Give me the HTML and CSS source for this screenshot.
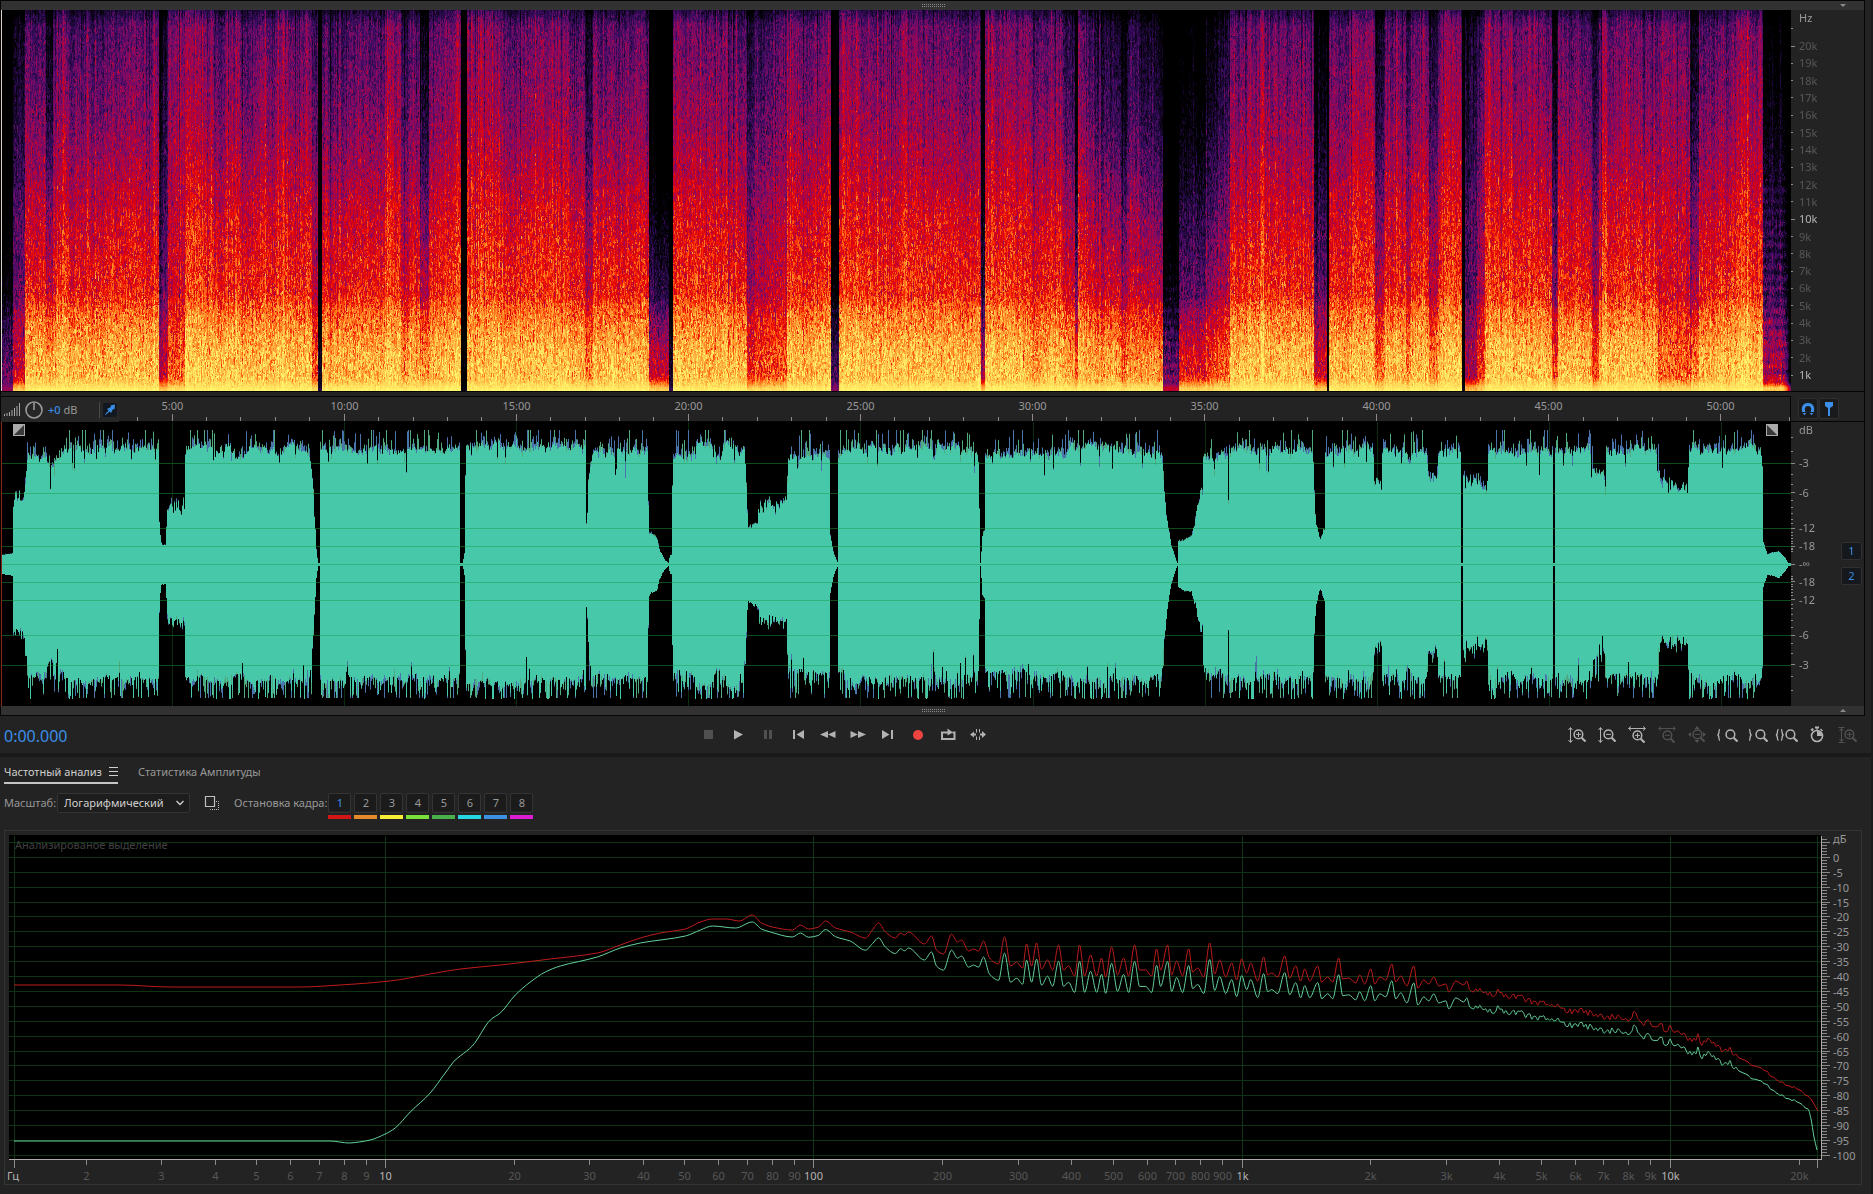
FILE: index.html
```html
<!DOCTYPE html>
<html lang="ru">
<head>
<meta charset="utf-8">
<title>Частотный анализ</title>
<link rel="stylesheet" href="styles.css">
</head>
<body>
<svg class="defs" aria-hidden="true">
  <symbol id="lens" viewBox="0 0 12 12"><circle cx="5" cy="5" r="4" fill="none" stroke="currentColor" stroke-width="1.4"/><path d="M8 8l3.6 3.6" stroke="currentColor" stroke-width="2"/></symbol>
</svg>
<main class="app">
  <section class="editor">
    <div class="strip"><span class="grip"></span><i class="caret down"></i></div>
    <div class="spectral">
      <div class="view view-spec"><canvas id="spectrogram"></canvas></div>
      <div class="scale"><svg id="hz-scale"></svg></div>
    </div>
    <div class="timeline">
      <div class="ruler">
        <svg id="ruler"></svg>
        <div class="hud">
          <svg class="bars" width="18" height="16" viewBox="0 0 18 16"><path d="M1.5 14v-2M4 14v-3M6.500 14v-4M9 14v-6M11.500 14v-8M14 14V4M16.500 14V1" stroke="currentColor" stroke-width="1"/></svg>
          <svg width="20" height="20" viewBox="0 0 20 20"><circle cx="10" cy="10" r="8" fill="none" stroke="currentColor" stroke-width="1.6"/><path d="M10 3v7" stroke="currentColor" stroke-width="1.6"/></svg>
          <span class="gain"><b>+0</b> dB</span>
          <button class="pin" aria-label="Закрепить"><svg width="12" height="12" viewBox="0 0 12 12"><path d="M6.500 1.500L11 0.500 10.500 5.500 9 5 7 9 5.600 7.400 1.500 11 1 10.500 4.600 6.400 3 5 7 3z" fill="currentColor"/></svg></button>
        </div>
      </div>
      <div class="snap">
        <button aria-label="Привязка"><svg width="14" height="14" viewBox="0 0 14 14"><path d="M4.500 12C1 9 1.500 2.500 7 2.500S13 9 9.500 12" fill="none" stroke="currentColor" stroke-width="3"/><path d="M1.500 10.500h4M8.500 10.500h4" stroke="#161b22"/></svg></button>
        <button aria-label="Маркер"><svg width="14" height="14" viewBox="0 0 14 14"><path d="M3 0h8v4L8 6v8H6V6L3 4z" fill="currentColor"/></svg></button>
      </div>
    </div>
    <div class="waves">
      <div class="view view-wave"><canvas id="waveform"></canvas>
        <svg class="fade fade-in" width="12" height="12" viewBox="0 0 12 12"><path d="M0 0h12v12H0z" fill="#aaa"/><path d="M11 1v10H1z" fill="#3a3a3a"/></svg>
        <svg class="fade fade-out" width="12" height="12" viewBox="0 0 12 12"><path d="M0 0h12v12H0z" fill="#aaa"/><path d="M1 1v10h10z" fill="#3a3a3a"/></svg>
      </div>
      <div class="scale"><svg id="db-scale"></svg>
        <div class="channels"><button>1</button><button>2</button></div>
      </div>
    </div>
    <div class="strip"><span class="grip"></span><i class="caret up"></i></div>
  </section>

  <section class="transport">
    <output class="clock">0:00.000</output>
    <div class="play">
      <button class="off" aria-label="Стоп"><svg viewBox="0 0 20 20"><path d="M6 5h9v9H6z" fill="currentColor"/></svg></button>
      <button aria-label="Воспроизвести"><svg viewBox="0 0 20 20"><path d="M6 5l9 4.500-9 5z" fill="currentColor"/></svg></button>
      <button class="off" aria-label="Пауза"><svg viewBox="0 0 20 20"><path d="M6 5h3v9H6zM11 5h3v9h-3z" fill="currentColor"/></svg></button>
      <button aria-label="В начало"><svg viewBox="0 0 20 20"><path d="M5 5h2v9H5zM16 5v9L8.500 9.500z" fill="currentColor"/></svg></button>
      <button aria-label="Назад"><svg viewBox="0 0 20 20"><path d="M10 6v7L2 9.500zM17.500 6v7l-7.500-3.500z" fill="currentColor"/></svg></button>
      <button aria-label="Вперёд"><svg viewBox="0 0 20 20"><path d="M2.500 6v7L10 9.500zM10 6v7l8-3.500z" fill="currentColor"/></svg></button>
      <button aria-label="В конец"><svg viewBox="0 0 20 20"><path d="M13 5h2v9h-2zM4 5v9l7.500-4.500z" fill="currentColor"/></svg></button>
      <button class="rec" aria-label="Запись"><svg viewBox="0 0 20 20"><circle cx="10" cy="10" r="5" fill="currentColor"/></svg></button>
      <button aria-label="Цикл"><svg viewBox="0 0 20 20"><path d="M7 7.500H4V14h12.500V7.500H14.500" fill="none" stroke="currentColor" stroke-width="2"/><path d="M7 6.500h2.500V3.500l5.500 4-5.500 3V8.500H7z" fill="currentColor"/></svg></button>
      <button aria-label="Пропуск выделения"><svg viewBox="0 0 20 20"><path d="M2 9.500l4-3v2h2v2H6v2zM18 9.500l-4-3.500v2.500h-2v2h2V13z" fill="currentColor"/><path d="M8.500 4v3.500M8.500 11.500V15M11.500 4v3.500M11.500 11.500V15" stroke="currentColor"/></svg></button>
    </div>
    <div class="zooms">
      <button aria-label="Увеличить амплитуду"><svg viewBox="0 0 20 20"><path d="M3.500 3v14M1.500 5l2-2.500 2 2.500M1.500 15l2 2.500 2-2.500" fill="none" stroke="currentColor"/><use href="#lens" x="6" y="4" width="13" height="13"/><path d="M9 9.400h5M11.500 7v5" stroke="currentColor"/></svg></button>
      <button aria-label="Уменьшить амплитуду"><svg viewBox="0 0 20 20"><path d="M3.500 3v14M1.500 5l2-2.500 2 2.500M1.500 15l2 2.500 2-2.500" fill="none" stroke="currentColor"/><use href="#lens" x="6" y="4" width="13" height="13"/><path d="M9 9.400h5" stroke="currentColor"/></svg></button>
      <button aria-label="Увеличить время"><svg viewBox="0 0 20 20"><path d="M2 3.500h16M4 1.500l-2.500 2L4 5.500M16 1.500l2.500 2-2.500 2" fill="none" stroke="currentColor"/><use href="#lens" x="5" y="5" width="13" height="13"/><path d="M8 10.400h5M10.500 8v5" stroke="currentColor"/></svg></button>
      <button class="off" aria-label="Уменьшить время"><svg viewBox="0 0 20 20"><path d="M2 3.500h16M4 1.500l-2.500 2L4 5.500M16 1.500l2.500 2-2.500 2" fill="none" stroke="currentColor"/><use href="#lens" x="5" y="5" width="13" height="13"/><path d="M8 10.400h5" stroke="currentColor"/></svg></button>
      <button class="off" aria-label="Показать всё"><svg viewBox="0 0 20 20"><path d="M10 1l2.500 3h-5zM10 18l2.500-3h-5zM1 9.500l3-2.500v5zM19 9.500L16 7v5z" fill="currentColor"/><use href="#lens" x="5" y="4" width="13" height="13"/><path d="M8 9.400h5" stroke="currentColor"/></svg></button>
      <button aria-label="К началу выделения"><svg viewBox="0 0 20 20"><path d="M3 4.500c-2 0 0 5-2.500 5.500C3 10.500 1 15.500 3 15.500" fill="none" stroke="currentColor" stroke-width="1.3"/><use href="#lens" x="8" y="4" width="13" height="13"/></svg></button>
      <button aria-label="К концу выделения"><svg viewBox="0 0 20 20"><path d="M2 4.500c2 0 0 5 2.500 5.500C2 10.500 4 15.500 2 15.500" fill="none" stroke="currentColor" stroke-width="1.3"/><use href="#lens" x="8" y="4" width="13" height="13"/></svg></button>
      <button aria-label="К выделению"><svg viewBox="0 0 20 20"><path d="M1.500 4.500c-2 0 0 5-2.500 5.500 2.500.5.500 5.500 2.500 5.500M4 4.500c2 0 0 5 2.500 5.500C4 10.500 6 15.500 4 15.500" fill="none" stroke="currentColor" stroke-width="1.3"/><use href="#lens" x="8" y="4" width="13" height="13"/></svg></button>
      <button aria-label="Масштаб по времени"><svg viewBox="0 0 20 20"><circle cx="10" cy="11" r="5.500" fill="none" stroke="currentColor" stroke-width="1.6"/><path d="M8 1.500h4v2H8zM9.500 3h1v3h-1zM10 11V6a5 5 0 0 1 5 5zM3.500 4.500l2-1.500 1.500 1.500-2 2zM14 3.500l2 2-1 1-2-2z" fill="currentColor"/></svg></button>
      <button class="off" aria-label="Вся амплитуда"><svg viewBox="0 0 20 20"><path d="M1.500 2.500h6M1.500 17.500h6M4.500 3v14M2.500 6l2-2.500L6.500 6M2.500 14l2 2.500 2-2.500" fill="none" stroke="currentColor"/><use href="#lens" x="7" y="4" width="13" height="13"/><path d="M10 9.400h5M12.500 7v5" stroke="currentColor"/></svg></button>
    </div>
  </section>

  <section class="analysis">
    <nav class="tabs">
      <button class="tab active">Частотный анализ <svg width="9" height="9" viewBox="0 0 9 9"><path d="M0 .5h9M0 4.500h9M0 8.500h9" stroke="currentColor"/></svg></button>
      <button class="tab">Статистика Амплитуды</button>
    </nav>
    <div class="options">
      <label for="scale-mode">Масштаб:</label>
      <span class="picker"><select id="scale-mode"><option>Логарифмический</option></select>
        <svg width="8" height="6" viewBox="0 0 8 6"><path d="M.5 1L4 4.500 7.500 1" fill="none" stroke="currentColor" stroke-width="1.3"/></svg></span>
      <button class="copy" aria-label="Копировать"><svg width="16" height="16" viewBox="0 0 16 16"><path d="M1.500 1.500h9v10h-9z" fill="none" stroke="currentColor" stroke-width="1.2"/><path d="M12 6.500h2.500v8h-8V13" fill="none" stroke="currentColor" stroke-dasharray="1 1"/></svg></button>
      <span class="hold-label">Остановка кадра:</span>
      <div class="holds">
        <button class="hold red on">1</button><button class="hold orange">2</button><button class="hold yellow">3</button><button class="hold lime">4</button><button class="hold green">5</button><button class="hold cyan">6</button><button class="hold blue">7</button><button class="hold pink">8</button>
      </div>
    </div>
    <div class="chart">
      <div class="plot"><svg id="plot"></svg></div>
      <div class="y-axis"><svg id="level-scale"></svg></div>
      <div class="x-axis"><svg id="freq-scale"></svg></div>
    </div>
  </section>
</main>
<script src="app.js"></script>
</body>
</html>
```
FILE: styles.css
```css
* { box-sizing: border-box; }
body {
  margin: 0;
  background: #232323;
  color: #989898;
  font: 11px/16px "Noto Sans", "Open Sans", sans-serif;
}
button, select {
  margin: 0;
  padding: 0;
  border: 0;
  background: none;
  color: inherit;
  font: inherit;
}
svg { display: block; overflow: visible; }
.defs { position: absolute; width: 0; height: 0; }
.app {
  display: flex;
  flex-direction: column;
  height: 100vh;
  min-height: 760px;
  border-right: 2px solid #1b1b1b;
}

/* editor */
.editor {
  flex: 714 1 0;
  min-height: 0;
  display: flex;
  flex-direction: column;
  margin-right: 6px;
  border: 1px solid #050505;
}
.strip {
  flex: none;
  height: 9px;
  display: grid;
  grid-template-columns: 1fr 24px 1fr;
  align-items: center;
  background: #323232;
}
.grip {
  grid-column: 2;
  height: 4px;
  background: conic-gradient(#8a8a8a 25%, transparent 0) 0 0 / 2px 2px;
}
.caret {
  justify-self: end;
  margin-right: 18px;
  border: solid transparent;
  border-width: 0 3px;
}
.caret.down { border-top: 3px solid #8a8a8a; }
.caret.up { border-bottom: 3px solid #8a8a8a; }
.spectral, .waves, .timeline { display: grid; grid-template-columns: 1fr 73px; }
.spectral { flex: 381 1 0; min-height: 0; border-bottom: 1px solid #050505; }
.waves { flex: 284 1 0; min-height: 0; }
.timeline { flex: none; height: 30px; padding-top: 4px; border-bottom: 1px solid #050505; }
.view { position: relative; min-width: 0; min-height: 0; height: 100%; background: #000; }
.view canvas { display: block; width: 100%; height: 100%; }
.view-spec { border-left: 1px solid #d8d0c8; }
.view-wave { border-left: 1px solid #8a2416; }
.scale { position: relative; min-height: 0; height: 100%; }
.scale svg, .ruler > svg, .plot svg, .y-axis svg, .x-axis svg { width: 100%; height: 100%; }
.fade { position: absolute; top: 2px; }
.fade-in { left: 11px; }
.fade-out { right: 13px; }
.ruler { position: relative; height: 25px; border: solid #050505; border-width: 1px 1px 0 0; }
.hud {
  position: absolute;
  left: 0;
  top: 0;
  width: 118px;
  height: 25px;
  display: flex;
  align-items: center;
  gap: 3px;
  padding-left: 2px;
  background: #262626;
}
.bars { color: #a8a8a8; }
.gain { flex: 1; padding-left: 1px; border-right: 1px solid #4a4a4a; white-space: nowrap; }
.gain b { color: #3b8fe8; font-weight: 500; }
.pin {
  width: 14px;
  height: 14px;
  display: grid;
  place-items: center;
  margin-right: 2px;
  border-radius: 2px;
  background: #111820;
  color: #3b8fe8;
}
.snap { display: flex; gap: 1px; padding: 2px 0 0 7px; }
.snap button {
  width: 20px;
  height: 21px;
  display: grid;
  place-items: center;
  border: 1px solid #303030;
  border-radius: 2px;
  background: #191a1c;
  color: #3b8fe8;
}
.channels {
  position: absolute;
  right: 2px;
  top: 50%;
  display: grid;
  gap: 7px;
  transform: translateY(-22px);
}
.channels button {
  width: 21px;
  height: 18px;
  border: 1px solid #303030;
  border-radius: 2px;
  background: #15181c;
  color: #3b8fe8;
  line-height: 16px;
}

/* scales */
text { fill: #989898; font-size: 11px; }
text.dim { fill: #575757; }
text.faint { fill: #404040; }
text.lit { fill: #b4b4b4; }
.tick { stroke: #8a8a8a; }
.grid-line { stroke: #0e3315; }
.axis-line { stroke: #b0a8a8; }
.curve { fill: none; }
.curve.peak { stroke: #c01c1c; }
.curve.level { stroke: #66d29e; }

/* transport */
.transport {
  flex: none;
  height: 41px;
  display: grid;
  grid-template-columns: 37% auto 1fr;
  align-items: center;
  padding: 0 14px 0 4px;
  border-bottom: 4px solid #191919;
  color: #b2b2b2;
}
.clock { color: #3b8fe8; font-size: 16px; line-height: 24px; padding-top: 3px; }
.play, .zooms { display: flex; gap: 10px; }
.play { padding-left: 8px; }
.zooms { justify-self: end; }
.transport button, .transport button svg { width: 20px; height: 20px; }
.transport .off { color: #505050; }
.transport .rec { color: #ee4440; }

/* analysis */
.analysis {
  flex: 423 1 0;
  min-height: 0;
  display: flex;
  flex-direction: column;
  padding: 5px 9px 9px 4px;
}
.tabs { display: flex; gap: 20px; height: 22px; }
.tab { display: flex; gap: 7px; align-items: center; height: 22px; padding-bottom: 3px; white-space: nowrap; }
.tab.active { color: #d0d0d0; border-bottom: 2px solid #c4c4c4; padding-bottom: 1px; }
.options { display: flex; align-items: flex-start; height: 27px; margin: 9px 0 10px; line-height: 20px; white-space: nowrap; }
.picker {
  display: flex;
  align-items: center;
  width: 133px;
  height: 20px;
  margin-left: 1px;
  padding: 0 5px 0 6px;
  border: 1px solid #343434;
  border-radius: 2px;
  background: #1d1d1d;
  color: #d0d0d0;
}
.picker select { appearance: none; flex: 1; min-width: 0; outline: 0; }
.copy { margin: 2px 14px 0; color: #c0c0c0; }
.holds { display: flex; gap: 3px; margin-left: 1px; }
.hold {
  width: 23px;
  height: 26px;
  border-bottom: 4px solid;
  background: linear-gradient(#1b1b1b, #1b1b1b) center top / 21px 18px no-repeat;
  line-height: 20px;
  padding-bottom: 2px;
  position: relative;
}
.hold::before {
  content: "";
  position: absolute;
  inset: 0 0 2px;
  border: 1px solid #343434;
  border-radius: 2px;
}
.hold.on { color: #3b8fe8; }
.red { border-color: #d01616; }
.orange { border-color: #e58a2a; }
.yellow { border-color: #f8ee38; }
.lime { border-color: #78e038; }
.green { border-color: #4ab04c; }
.cyan { border-color: #27d8e2; }
.blue { border-color: #3c90e2; }
.pink { border-color: #da1cd2; }
.chart {
  flex: 1 1 0;
  min-height: 0;
  display: grid;
  grid-template: minmax(0, 1fr) 25px / minmax(0, 1fr) 40px;
  padding: 4px 0 0 4px;
  border: 1px solid #343434;
}
.plot { min-height: 0; height: 100%; background: #000; }
.y-axis, .x-axis { min-height: 0; height: 100%; }
```
FILE: app.js
```js
(function () {
  'use strict';
  var NS = 'http://www.w3.org/2000/svg';
  var TRACK = 1788;
  var LEAD = 2;

  function random(seed) {
    return function () {
      seed = (seed + 0x6D2B79F5) | 0;
      var t = Math.imul(seed ^ (seed >>> 15), 1 | seed);
      t = (t + Math.imul(t ^ (t >>> 7), 61 | t)) ^ t;
      return ((t ^ (t >>> 14)) >>> 0) / 4294967296;
    };
  }
  function lerpTable(table, x) {
    if (x <= table[0][0]) return table[0][1];
    for (var i = 1; i < table.length; i++) {
      if (x <= table[i][0]) {
        var a = table[i - 1], b = table[i];
        return a[1] + (b[1] - a[1]) * (x - a[0]) / ((b[0] - a[0]) || 1);
      }
    }
    return table[table.length - 1][1];
  }
  function prepare(id) {
    var c = document.getElementById(id);
    c.width = c.clientWidth;
    c.height = c.clientHeight;
    return c;
  }
  function clear(id) {
    var s = document.getElementById(id);
    s.textContent = '';
    var box = s.getBoundingClientRect();
    return { el: s, w: box.width, h: box.height };
  }
  function line(s, x1, y1, x2, y2, cls) {
    var l = document.createElementNS(NS, 'path');
    l.setAttribute('d', 'M' + x1 + ' ' + y1 + 'L' + x2 + ' ' + y2);
    l.setAttribute('class', cls);
    s.el.appendChild(l);
  }
  function label(s, x, y, str, cls, anchor) {
    var t = document.createElementNS(NS, 'text');
    t.setAttribute('x', x);
    t.setAttribute('y', y);
    t.setAttribute('class', cls);
    t.setAttribute('text-anchor', anchor || 'start');
    t.textContent = str;
    s.el.appendChild(t);
  }
  function crisp(v) { return Math.floor(v) + 0.5; }

  /* Spectrogram: colour ramp, mean level by height, and quieter passages. */
  var RAMP = [[0, 0, 0, 0], [0.12, 22, 6, 44], [0.24, 58, 12, 98], [0.34, 118, 12, 104], [0.44, 166, 4, 76],
    [0.54, 214, 0, 20], [0.61, 240, 20, 0], [0.68, 255, 92, 18], [0.77, 255, 152, 48], [0.88, 255, 214, 88], [1, 255, 250, 110]];
  var PROFILE = [[0, 0.16], [8, 0.23], [16, 0.3], [60, 0.34], [110, 0.39], [160, 0.46], [210, 0.54], [255, 0.59],
    [285, 0.62], [300, 0.70], [325, 0.78], [345, 0.83], [370, 0.86], [376, 0.92], [381, 0.99]];
  /* start, end, level change at the top, level change at the bottom */
  var BANDS = [[0, 12, -0.7, -0.55], [12, 24, -0.26, -0.36], [24, 45, -0.04, 0], [45, 52, -0.22, 0], [62, 68, 0.06, 0.03],
    [158, 167, -0.3, -0.4], [167, 184, -0.03, -0.22], [186, 206, 0.06, 0.02], [212, 224, -0.11, 0], [240, 252, -0.07, 0],
    [311, 317, -0.1, -0.2], [317, 321, -0.8, -0.8], [340, 346, -0.09, 0], [384, 394, 0.08, 0.02], [400, 408, -0.08, -0.05],
    [419, 428, -0.25, -0.05], [460, 466, -0.9, -0.9], [466, 492, 0.06, -0.02], [505, 520, -0.05, 0], [530, 560, 0.05, 0],
    [584, 592, -0.18, -0.08], [648, 654, -0.5, -0.3], [654, 668, -0.6, -0.3], [668, 672, -0.75, -0.75], [705, 712, 0.06, 0], [746, 754, -0.14, -0.24],
    [754, 772, -0.06, -0.18], [772, 786, -0.01, -0.18], [786, 796, 0.05, 0], [830, 838, -0.65, -0.6], [840, 870, 0.04, 0.01],
    [900, 920, 0.03, 0], [980, 984, -0.5, -0.4], [990, 1010, 0.06, 0.01], [1022, 1042, 0.03, -0.04], [1062, 1074, -0.14, -0.03],
    [1074, 1077, -0.5, -0.15], [1085, 1100, -0.08, -0.03], [1100, 1104, -0.22, -0.08], [1104, 1120, -0.15, 0], [1120, 1126, -0.26, -0.08],
    [1126, 1138, -0.12, -0.07], [1138, 1162, -0.24, -0.08], [1162, 1178, -0.7, -0.5], [1178, 1205, -0.4, -0.26], [1205, 1217, -0.28, -0.18],
    [1217, 1229, -0.2, -0.15], [1242, 1246, -0.1, 0], [1259, 1263, 0.13, 0.08], [1274, 1277, 0.06, 0], [1313, 1326, -0.34, -0.32],
    [1326, 1328, -0.9, -0.9], [1348, 1372, 0.06, 0], [1374, 1383, -0.2, -0.12], [1392, 1404, 0.05, 0], [1405, 1410, -0.16, -0.09],
    [1428, 1437, -0.16, -0.1], [1440, 1460, 0.07, 0.03], [1461, 1464, -0.9, -0.9], [1464, 1476, -0.24, -0.46], [1476, 1484, -0.1, -0.27],
    [1484, 1490, 0.1, -0.03], [1508, 1511, 0.14, 0.05], [1528, 1534, 0.06, 0], [1551, 1557, -0.28, -0.2], [1591, 1598, -0.18, -0.18],
    [1601, 1606, 0.13, 0.03], [1640, 1654, 0.04, 0.03], [1657, 1690, 0.05, -0.16], [1689, 1698, -0.22, -0.09], [1730, 1748, 0.06, 0.03],
    [1762, 1790, -0.36, -0.42]];

  function drawSpectrogram() {
    var c = prepare('spectrogram'), ctx = c.getContext('2d');
    var w = c.width, h = c.height, img = ctx.createImageData(w, h), d = img.data;
    var rnd = random(71), wide = 0, mid = 0;
    var lut = [];
    for (var i = 0; i <= 400; i++) {
      var v = i / 400;
      lut.push([1, 2, 3].map(function (k) {
        return lerpTable(RAMP.map(function (s) { return [s[0], s[k]]; }), v);
      }));
    }
    var mean = [];
    for (var y = 0; y < h; y++) mean.push(lerpTable(PROFILE, y * 381 / h));
    for (var x = 0; x < w; x++) {
      var u = x * TRACK / w + LEAD, top = 0, low = 0;
      BANDS.forEach(function (b) { if (u >= b[0] && u < b[1]) { top += b[2]; low += b[3]; } });
      wide = wide * 0.95 + (rnd() - 0.5) * 0.024;
      mid = mid * 0.6 + (rnd() - 0.5) * 0.07;
      var fine = (rnd() - 0.5) * 0.1;
      if (rnd() < 0.05) fine -= 0.12;
      if (rnd() < 0.05) fine += 0.08;
      var cell = 0;
      for (y = 0; y < h; y++) {
        var t = y / h, edge = Math.max(0, Math.min(1, (t - 0.96) / 0.03));
        if (rnd() < 0.5) cell = (rnd() + rnd() + rnd() - 1.5) * (0.11 + 0.05 * t);
        var amount = 1 - 0.7 * edge;
        var e = mean[y] + cell * amount + (wide + mid + fine) * (1 - t * 0.65) * amount;
        var shift = top + (low - top) * t * t;
        e += shift * (low > -0.5 ? amount : 1);
        if (u > 1761) {
          e += t > 0.45 ? Math.sin(y * 0.57) * 0.05 : 0;
          e -= Math.pow(Math.max(0, (u - 1780) / 9), 2) * 0.5;
        }
        if (u > 1162 && u < 1178) e += Math.sin(y * 0.57) * 0.06 * t;
        var p = lut[Math.max(0, Math.min(400, Math.round(e * 400)))], o = (y * w + x) * 4;
        d[o] = p[0]; d[o + 1] = p[1]; d[o + 2] = p[2]; d[o + 3] = 255;
      }
    }
    ctx.putImageData(img, 0, 0);
  }

  /* Waveform envelope: position along the track, half height out of 142. */
  var ENVELOPE = [[0, 3], [1, 9], [11, 11], [11.1, 66], [22, 66], [26, 100], [27, 108], [45, 109], [49, 94], [60, 108], [66, 115], [157, 115],
    [158, 34], [160, 20], [164, 19], [165, 36], [166, 56], [183, 58], [183.1, 110], [186, 116], [228, 116], [236, 106], [244, 114], [306, 114], [310, 98],
    [313, 50], [315, 10], [317, 0], [318, 0], [318.1, 114], [458, 113], [458.1, 0], [461, 0], [463, 12], [464, 112], [466, 118], [584, 115],
    [584.1, 45], [586, 45], [586.1, 80], [591, 112], [646, 113], [647, 30], [655, 26], [658, 14], [663, 4], [667, 1], [668, 9], [670, 9], [670.1, 50], [671.1, 106],
    [690, 108], [695, 120], [708, 122], [718, 103], [725, 122], [743, 112], [745, 60], [746, 36], [756, 40], [757, 58], [773, 56], [785, 60], [786, 106],
    [828, 108], [828.1, 30], [832, 10], [836, 1], [836.1, 105], [845, 115], [930, 114], [932, 102], [936, 116], [975, 112], [977, 100], [978, 0], [979, 0], [980, 28], [983, 32],
    [983.1, 108], [1066, 110], [1072, 118], [1110, 112], [1160, 110], [1162, 78], [1165, 46], [1169, 20], [1175, 1], [1176, 1], [1176.1, 22], [1189, 27],
    [1193, 40], [1197, 65], [1201, 66], [1201.1, 105], [1226, 108], [1226.1, 60], [1227, 60], [1227.1, 113], [1311, 114], [1312, 70], [1314, 40], [1318, 24], [1322, 34], [1323, 40], [1323.1, 112],
    [1371, 114], [1372, 84], [1380, 80], [1380.1, 112], [1402, 114], [1406, 102], [1412, 113], [1424, 113], [1426, 88], [1435, 86], [1436, 113], [1459, 113],
    [1459.1, 1], [1461, 1], [1461.1, 86], [1485, 77], [1486, 112], [1551, 112], [1551.1, 1], [1553, 1], [1553.1, 112], [1588, 114], [1589, 98], [1603, 86], [1604, 112],
    [1654, 114], [1655, 92], [1659, 79], [1686, 77], [1686.1, 114], [1759, 114], [1760, 100], [1761, 22], [1765, 10], [1776, 13], [1782, 7], [1786, 1], [1788, 0]];

  function drawWaveform() {
    var c = prepare('waveform'), ctx = c.getContext('2d');
    var w = c.width, h = c.height, mid = Math.floor(h / 2), k = h / 284;
    ctx.fillStyle = '#000';
    ctx.fillRect(0, 0, w, h);
    function gridRows(color) {
      ctx.fillStyle = color;
      [0, 3, 6, 12, 18].forEach(function (db) {
        var off = db ? Math.round(142 * k * Math.pow(10, -db / 20)) : 0;
        if (off) ctx.fillRect(0, mid - off, w, 1);
        ctx.fillRect(0, mid + off, w, 1);
      });
    }
    gridRows('#0c2c10');
    for (var m = 5; m < 52; m += 5) ctx.fillRect(Math.round(m * 34.4 * w / TRACK) - 2, 0, 1, h);
    var rnd = random(12);
    [-1, 1].forEach(function (side) {
      var drift = 0;
      for (var x = 0; x < w; x++) {
        var base = lerpTable(ENVELOPE, x * TRACK / w + LEAD - 1), n = Math.min(1, base / 100);
        drift = drift * 0.7 + (rnd() - 0.5) * 6;
        var a = base + (drift + (rnd() - 0.5) * 5) * n;
        if (base < 90 && base > 40) a += (rnd() - 0.5) * 12;
        if (base > 88 && rnd() < 0.06) a -= rnd() * 22;
        var extra = rnd() * rnd() * 14 * n;
        if (base > 88 && rnd() < 0.16) extra += rnd() * 26;
        if (base > 88 && side > 0 && rnd() < 0.35) a += rnd() * 22;
        a = Math.min(134, Math.max(0.5, a));
        var peak = Math.min(134, a + extra);
        ctx.fillStyle = rnd() < 0.55 ? '#4a74ac' : '#50aa80';
        ctx.fillRect(x, side < 0 ? mid - peak * k : mid, 1, peak * k);
        ctx.fillStyle = '#46c8a9';
        ctx.fillRect(x, side < 0 ? mid - Math.round(a * k) : mid, 1, Math.round(a * k) + 1);
      }
    });
    gridRows('rgba(10,140,40,0.35)');
  }

  function drawEditorScales() {
    var s = clear('hz-scale'), i, x, y;
    for (i = 1; i <= 21; i++) {
      y = (36 + (20 - i) * 17.32) * s.h / 381;
      line(s, 0, crisp(y), i % 10 ? 2 : 4, crisp(y), 'tick');
      if (i < 21) label(s, 8, Math.round(y) + 4, i + 'k', i === 10 || i === 1 ? 'lit' : 'dim');
    }
    label(s, 8, 12, 'Hz', '');

    s = clear('db-scale');
    var mid = Math.floor(s.h / 2);
    for (i = 1; i <= 21; i++) {
      var off = 142 * Math.pow(10, -i / 20) * s.h / 284;
      var major = [3, 6, 12, 18].indexOf(i) >= 0;
      [-1, 1].forEach(function (side) {
        y = mid + side * off;
        line(s, 0, crisp(y), major ? 4 : 2, crisp(y), 'tick');
        if (major) label(s, 8, Math.round(y) + 4, '-' + i, '');
      });
    }
    line(s, 0, mid + 0.5, 4, mid + 0.5, 'tick');
    label(s, 8, mid + 4, '-∞', '');
    label(s, 8, 12, 'dB', '');

    s = clear('ruler');
    for (i = 4; i <= 52; i++) {
      x = crisp(i * 34.4 * s.w / TRACK - 1);
      line(s, x, 24, x, i % 5 ? 20 : 17, 'tick');
      if (i % 5 === 0) label(s, x, 13, i + ':00', '', 'middle');
    }
  }

  /* Frequency curves in plot units: 1811 across, 324 down. */
  var PEAK = [[5, 150], [111, 150], [161, 152], [291, 152], [331, 150], [381, 146], [421, 139], [451, 134], [491, 130], [541, 124], [588, 118], [611, 110],
    [631, 103], [651, 98], [676, 94], [691, 87], [703, 84], [717, 84], [730, 86], [743, 80], [752, 88], [763, 92], [783, 95], [791, 90], [799, 94], [809, 92],
    [816, 86], [826, 93], [841, 97], [856, 103], [863, 95], [869, 88], [876, 97], [886, 103], [891, 98], [895, 100], [899, 97], [915, 109], [922, 101], [927, 115],
    [934, 119], [942, 99], [948, 107], [952, 105], [959, 116], [964, 114], [969, 116], [974, 106], [980, 123], [989, 129], [995, 102], [1001, 131], [1007, 127],
    [1013, 133], [1017, 109], [1022, 131], [1027, 108], [1032, 134], [1038, 125], [1043, 135], [1049, 110], [1054, 135], [1059, 131], [1065, 141], [1070, 110],
    [1075, 141], [1081, 120], [1087, 141], [1092, 123], [1096, 142], [1102, 112], [1108, 140], [1114, 123], [1119, 141], [1125, 110], [1130, 135], [1136, 135],
    [1142, 141], [1147, 114], [1151, 135], [1158, 110], [1162, 140], [1167, 126], [1173, 141], [1179, 114], [1183, 137], [1188, 133], [1194, 142], [1200, 108],
    [1205, 139], [1210, 125], [1216, 142], [1222, 128], [1227, 145], [1232, 124], [1237, 138], [1241, 128], [1248, 146], [1254, 122], [1258, 140], [1262, 138],
    [1268, 142], [1275, 121], [1280, 143], [1286, 131], [1291, 146], [1295, 134], [1300, 146], [1308, 131], [1312, 147], [1318, 142], [1323, 147], [1329, 123],
    [1333, 144], [1339, 143], [1346, 148], [1350, 140], [1355, 149], [1361, 134], [1365, 149], [1370, 142], [1376, 145], [1382, 129], [1386, 147], [1391, 141],
    [1397, 151], [1404, 131], [1408, 153], [1414, 145], [1419, 149], [1424, 142], [1429, 151], [1436, 149], [1439, 157], [1446, 146], [1454, 150], [1457, 146],
    [1460, 155], [1473, 156], [1484, 160], [1488, 157], [1500, 162], [1511, 162], [1522, 167], [1538, 168], [1551, 172], [1558, 177], [1571, 175], [1594, 183],
    [1607, 181], [1621, 184], [1625, 177], [1631, 190], [1639, 187], [1648, 194], [1652, 186], [1654, 197], [1661, 192], [1668, 198], [1684, 206], [1688, 201],
    [1691, 209], [1699, 205], [1711, 214], [1720, 215], [1728, 224], [1736, 225], [1743, 231], [1755, 235], [1761, 241], [1778, 251], [1786, 253], [1798, 261], [1808, 276]];
  var LEVEL_LOW = [[5, 306], [321, 306], [340, 308], [350, 307], [361, 305], [376, 299], [386, 293], [401, 277], [421, 258], [436, 238], [446, 225], [451, 221], [463, 211],
    [481, 185], [491, 178], [506, 160], [521, 147], [536, 137], [551, 131], [588, 122], [611, 113], [631, 108], [676, 101], [691, 95], [703, 91], [726, 93], [743, 87],
    [752, 94], [761, 97], [783, 102]];
  var OFFSET = [[790, 8], [840, 9], [870, 15], [900, 16], [1480, 17], [1550, 14], [1798, 13]];

  function smooth(points) {
    var n = points.length, slope = [], tan = [], i;
    for (i = 0; i < n - 1; i++) slope.push((points[i + 1][1] - points[i][1]) / (points[i + 1][0] - points[i][0]));
    for (i = 0; i < n; i++) {
      var a = slope[Math.max(0, i - 1)], b = slope[Math.min(n - 2, i)];
      tan.push(a * b <= 0 ? 0 : 2 * a * b / (a + b));
    }
    var d = 'M' + points[0][0] + ' ' + points[0][1];
    for (i = 0; i < n - 1; i++) {
      var p = points[i], q = points[i + 1], s = (q[0] - p[0]) / 3;
      d += 'C' + [p[0] + s, p[1] + tan[i] * s, q[0] - s, q[1] - tan[i + 1] * s, q[0], q[1]].map(function (v) { return v.toFixed(1); }).join(' ');
    }
    return d;
  }
  function roughen(points) {
    var rnd = random(5), out = points.filter(function (p) { return p[0] <= 1460; });
    for (var x = 1462; x <= 1796; x += 2) out.push([x, lerpTable(points, x) + (rnd() - 0.5) * (x > 1730 ? 2 : 6)]);
    return out.concat(points.filter(function (p) { return p[0] > 1796; }));
  }
  function freqX(f, w) { return (376.4 + 428 * Math.log10(f / 10)) * w / 1811; }
  function levelY(db, h) { return (22.3 - db * 2.98) * h / 324; }

  function drawAnalysis() {
    var s = clear('plot'), db, x;
    for (db = 5; db >= -100; db -= 5) line(s, 0, crisp(levelY(db, s.h)), s.w, crisp(levelY(db, s.h)), 'grid-line');
    [1.359, 10, 100, 1000, 10000, 22050].forEach(function (f) {
      x = crisp(freqX(f, s.w));
      line(s, x, 1, x, s.h, 'grid-line');
    });
    label(s, 6, 14, 'Анализированое выделение', 'faint');
    var peak = roughen(PEAK);
    var level = LEVEL_LOW.concat(peak.filter(function (p) { return p[0] > 785 && p[0] < 1799; }).map(function (p) {
      return [p[0], p[1] + lerpTable(OFFSET, p[0])];
    }), [[1801, 284], [1804, 302], [1807, 315]]);
    [[peak, 'peak'], [level, 'level']].forEach(function (pair) {
      var p = document.createElementNS(NS, 'path');
      p.setAttribute('d', smooth(pair[0].map(function (q) { return [q[0] * s.w / 1811, q[1] * s.h / 324]; })));
      p.setAttribute('class', 'curve ' + pair[1]);
      s.el.appendChild(p);
    });

    var v = clear('level-scale');
    line(v, 0.5, 1, 0.5, v.h, 'axis-line');
    for (db = 6; db >= -100; db--) {
      var y = crisp(levelY(db, v.h));
      line(v, 1, y, db % 5 ? 6 : 9, y, 'tick');
      if (db % 5 === 0 && db <= 0) label(v, 12, y + 4, String(db), '');
    }
    label(v, 12, 8, 'дБ', '');

    var a = clear('freq-scale');
    line(a, 0, 0.5, s.w + 1, 0.5, 'axis-line');
    for (var dec = 1; dec <= 10000; dec *= 10) {
      for (var m = 1; m <= 9; m++) {
        var f = dec * m;
        if (f < 2 || f > 20000) continue;
        x = crisp(freqX(f, s.w));
        line(a, x, 1, x, m === 1 ? 9 : 6, 'tick');
        label(a, x, 21, f >= 1000 ? f / 1000 + 'k' : String(f), m === 1 ? 'lit' : 'dim', 'middle');
      }
    }
    [1.359, 22050].forEach(function (f) {
      x = crisp(freqX(f, s.w));
      line(a, x, 1, x, 9, 'tick');
    });
    label(a, 4, 21, 'Гц', 'lit', 'middle');
  }

  function draw() {
    drawSpectrogram();
    drawWaveform();
    drawEditorScales();
    drawAnalysis();
  }
  draw();
  window.addEventListener('resize', draw);
})();
```
